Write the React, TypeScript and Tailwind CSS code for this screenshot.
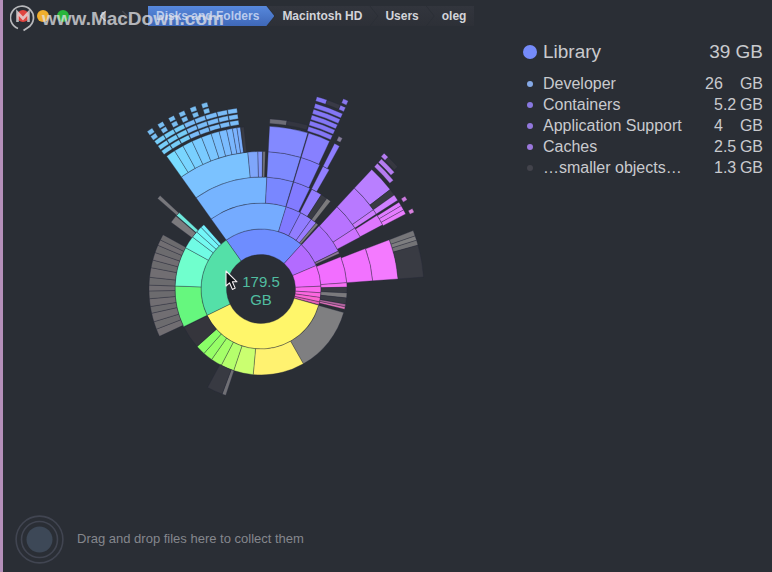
import { ChevronLeft, ChevronRight } from "lucide-react";

type Slice = {
  from: number;
  to: number;
  inner: number;
  outer: number;
  fill: string;
};

const RINGS = [34.5, 60, 86, 112, 137.5, 163];
const GRAY = "#7b7a7d";
const DARK = "#393b43";

const CRUMBS = ["Macintosh HD", "Users", "oleg"];

const ITEMS = [
  { name: "Developer", whole: "26", fraction: "", dot: "bg-[#85a9e6]" },
  { name: "Containers", whole: "5", fraction: ".2", dot: "bg-[#8878e0]" },
  { name: "Application Support", whole: "4", fraction: "", dot: "bg-[#9278dc]" },
  { name: "Caches", whole: "2", fraction: ".5", dot: "bg-[#9b78dc]" },
  { name: "…smaller objects…", whole: "1", fraction: ".3", dot: "bg-[#42434b]" },
];

// a slice that fills ring n (1 = next to the hole)
function ring(n: number, from: number, to: number, fill: string): Slice {
  return { from, to, inner: RINGS[n - 1], outer: RINGS[n], fill };
}

// a thin band for the deepest levels, centred on radius r
function band(r: number, from: number, to: number, fill: string): Slice {
  return { from, to, inner: r - 2.3, outer: r + 2.3, fill };
}

// consecutive slices in one ring, cut at the given angles
function cuts(n: number, angles: number[], fills: string[]): Slice[] {
  return angles.slice(1).map((to, i) => ring(n, angles[i], to, fills[i % fills.length]));
}

const SLICES: Slice[] = [
  // Library
  ring(1, -35.4, 42.2, "#6e8dff"),
  ring(2, -35.4, 17, "#75abff"),
  ring(3, -35.4, 3, "#76b4ff"),
  ring(4, -35.4, -5.5, "#7bc2ff"),
  ring(4, -5.5, -1.3, "#7fa6fb"),
  ring(4, -1.3, 0.6, "#8199fb"),
  ring(4, 0.8, 1.8, "#77777f"),
  ...cuts(
    5,
    [-35.4, -32, -28.6, -25, -21.4, -17.8, -14.9, -12.2, -10.1, -8.5, -7.3],
    ["#78dcff", "#79d5ff", "#79d0ff", "#7acbff", "#7bc6ff", "#7bc1ff", "#7bbcff", "#7bb7ff", "#7bb3ff", "#7aafff"]
  ),
  ring(5, -7.1, -6, DARK),
  ring(3, 3, 16.7, "#7987ff"),
  ring(4, 3, 16.7, "#7e8aff"),
  ring(5, 3, 16.7, "#8389ff"),
  ring(2, 17, 27.5, "#817aff"),
  ring(2, 27.5, 35.8, "#917dff"),
  ring(2, 35.8, 39.8, "#9a7cff"),
  ring(2, 39.8, 41.6, GRAY),
  ring(3, 17, 25.9, "#827bff"),
  ring(4, 17, 25.3, "#837eff"),
  ring(5, 17, 24.9, "#8780ff"),
  ring(3, 27, 32.6, "#947dff"),
  ring(3, 32.6, 36, DARK),
  ring(3, 36, 38.4, GRAY),
  ring(4, 26.8, 29.8, "#917eff"),
  ring(5, 26.8, 28.8, "#8f7eff"),

  // Applications
  ring(1, 42.2, 67, "#b36bff"),
  ring(2, 42.6, 63.8, "#ae6fff"),
  ring(2, 64, 65.6, "#8f7896"),
  ring(3, 42.8, 57, "#b873ff"),
  ring(3, 57, 62.4, "#cd73ff"),
  ring(4, 42.8, 54.8, "#b879ff"),
  ring(4, 54.8, 57, "#ce7bff"),
  ring(4, 57.6, 62.2, "#de76ff"),
  ring(5, 42.8, 52.4, "#b97fff"),
  ring(5, 52.4, 54.8, DARK),
  ring(5, 54.8, 57, "#cf81ff"),
  ...cuts(5, [57.8, 59.3, 61, 62.6], ["#e07cff", "#e57cff", "#ea7cff"]),

  // System
  ...cuts(1, [67, 87.3, 93.6, 98.2, 102.4, 105.2], ["#f36bff", "#fb69ee", "#fb67df", "#fb66d2", "#e75fb8"]),
  ring(2, 68, 85.8, "#f26eff"),
  ring(2, 85.8, 88.8, "#f66ff4"),
  ring(2, 88.8, 92.6, DARK),
  ring(2, 92.6, 96, GRAY),
  ring(2, 96, 100, DARK),
  ring(2, 100.2, 102, "#b566a1"),
  ring(2, 102, 103.6, "#e072ba"),
  ring(3, 68.8, 85.8, "#f272ff"),
  ring(4, 69, 85.8, "#f47aff"),
  ...cuts(5, [69, 71, 72.6, 74.4], ["#767679", "#7e7e80", "#737376"]),
  ring(5, 74.4, 85.8, DARK),

  // Users
  ring(1, 105.7, 244, "#fff66a"),
  ring(2, 105.9, 150.5, "#7f7f81"),
  ring(2, 150.5, 185.2, "#fff270"),
  ...cuts(2, [185.2, 198.5, 207.5, 215, 221.5, 228], ["#caff70", "#b5ff6c", "#a5ff69", "#97ff67", "#8aff67"]),
  ring(2, 228, 243.5, "#35353c"),
  ring(3, 198.3, 200.3, "#707075"),
  ring(3, 200.3, 208.5, "#383a42"),

  // Hovered folder
  ring(1, 244, 324.6, "#54e0a8"),
  ring(2, 244, 272, "#66f77e"),
  ring(2, 272, 298.7, "#70ffcd"),
  ...cuts(2, [298.7, 307.2, 311.6, 315.8, 318.4], ["#70fbe4", "#73faf0", "#73f6f8", "#73f0fc"]),
  ...cuts(3, [245, 249, 253, 257.5, 261, 265, 269, 272, 276, 281, 285, 289, 293, 296, 299], ["#716e72", "#6c6b6e"]),
  ring(3, 306.6, 310.6, GRAY),
  ring(3, 311, 313, "#6fe9dc"),
  ring(4, 311.2, 312.8, "#77777b"),

  // Deepest levels above Developer
  ...[168, 174, 180].flatMap((r) =>
    [-35.8, -32.2, -28.6, -25, -21.4, -17.8, -14, -10.6].map((a, i) =>
      band(r, a, [-32.4, -28.8, -25.2, -21.6, -18, -14.2, -10.8, -7.6][i], i < 3 ? "#76cdf8" : "#7abcf8")
    )
  ),
  ...[186, 192].flatMap((r) =>
    [-35, -31.3, -27.6, -24.2, -20.6, -17].map((a) => band(r, a - 0.9, a + 0.9, "#79bdf0"))
  ),

  // Deepest levels above Containers
  band(168, 3, 8.8, "#6d6d76"),
  band(168, 8.8, 16, "#343640"),
  ...[167, 173, 179, 185, 191].map((r) => band(r, 16.3, 25, "#8477f5")),
  band(198, 16.2, 19.3, "#8477f5"),
  band(198, 19.3, 23.3, "#393a46"),
  band(198, 23.4, 25, "#8a77ed"),
  band(205, 23.4, 24.9, "#8a77ed"),
  band(169, 27, 28.4, "#857d99"),

  // Deepest levels above Applications
  band(169, 42.8, 50.6, "#b57cf0"),
  band(175, 42.8, 48.8, "#b57cf0"),
  band(181, 42.2, 44, "#b57cf0"),
  band(181, 44, 48.2, "#363740"),
  band(169, 57.2, 58.6, "#ca79dc"),
  band(169, 62, 63.4, "#d880dc"),
];

function point(r: number, deg: number) {
  const a = (deg * Math.PI) / 180;
  return `${(r * Math.sin(a)).toFixed(2)} ${(-r * Math.cos(a)).toFixed(2)}`;
}

function slicePath({ from, to, inner, outer }: Slice) {
  const large = to - from > 180 ? 1 : 0;
  return [
    `M${point(outer, from)}`,
    `A${outer} ${outer} 0 ${large} 1 ${point(outer, to)}`,
    `L${point(inner, to)}`,
    `A${inner} ${inner} 0 ${large} 0 ${point(inner, from)}`,
    "Z",
  ].join(" ");
}

function Sunburst() {
  return (
    <svg width="380" height="420" viewBox="-190 -210 380 420" role="img" aria-label="Disk usage">
      {SLICES.map((slice, i) => (
        <path
          key={i}
          d={slicePath(slice)}
          fill={slice.fill}
          stroke="#23283a"
          strokeOpacity={0.48}
          strokeWidth={0.7}
        />
      ))}
      <text textAnchor="middle" className="fill-[#51bda0] text-[15px]">
        <tspan x="0" y="-2">179.5</tspan>
        <tspan x="0" y="16">GB</tspan>
      </text>
      {/* Mouse pointer */}
      <path
        d="M-35 -18V-3L-31.5 -6.2L-28.6 0.4L-25.8 -0.9L-28.6 -7.2H-24Z"
        fill="#111318"
        stroke="#f4eef2"
        strokeWidth={1.1}
        strokeLinejoin="round"
      />
    </svg>
  );
}

function TitleBar() {
  return (
    <header className="flex h-8 items-center">
      <div className="flex w-[63px] gap-2 pl-[14px]">
        <button aria-label="Close" className="h-3 w-3 shrink-0 rounded-full bg-[#e0443f]" />
        <button aria-label="Minimize" className="h-3 w-3 shrink-0 rounded-full bg-[#f0ae2e]" />
        <button aria-label="Zoom" className="h-3 w-3 shrink-0 rounded-full bg-[#27b53c]" />
      </div>
      <div className="flex w-[82px] items-center gap-1 pl-7">
        <button aria-label="Back" className="text-[#b4b6bc]">
          <ChevronLeft size={18} strokeWidth={2} />
        </button>
        <button aria-label="Forward" className="text-[#43464e]">
          <ChevronRight size={18} strokeWidth={2} />
        </button>
      </div>
      <nav className="flex h-5 text-[12px] leading-[21px] font-bold whitespace-nowrap text-[#d3d4d9]">
        <a
          href="#disks"
          className="bg-linear-to-b from-[#5788dc] to-[#3f68b8] pr-[15px] pl-2 text-[#b9cbee] [clip-path:polygon(0_0,calc(100%-8px)_0,100%_50%,calc(100%-8px)_100%,0_100%)]"
        >
          Disks and Folders
        </a>
        {CRUMBS.map((crumb) => (
          <a
            key={crumb}
            href={`#${crumb}`}
            className="-ml-[7px] bg-linear-to-b from-[#32353d] to-[#2d3037] pr-[15px] pl-[15px] [clip-path:polygon(0_0,calc(100%-8px)_0,100%_50%,calc(100%-8px)_100%,0_100%,8px_50%)] last:pr-2 last:[clip-path:polygon(0_0,100%_0,100%_100%,0_100%,8px_50%)]"
          >
            {crumb}
          </a>
        ))}
      </nav>
    </header>
  );
}

function FolderList() {
  return (
    <aside className="w-[254px] shrink-0 pt-2 pr-[9px] pl-[5px] text-[#c9cace]">
      <div className="flex h-6 items-center text-[19px]">
        <span className="mr-[6px] h-[14px] w-[14px] rounded-full bg-[#758bfa]" />
        <h1 className="flex-1">Library</h1>
        <span>39 GB</span>
      </div>
      <table className="mt-[9px] w-full text-[16px] leading-[21px]">
        <tbody>
          {ITEMS.map((item) => (
            <tr key={item.name}>
              <td className="w-5">
                <span className={`ml-1 block h-[6px] w-[6px] rounded-full ${item.dot}`} />
              </td>
              <th scope="row" className="text-left font-normal whitespace-nowrap">
                {item.name}
              </th>
              <td>
                <span className="flex justify-end">
                  <span>{item.whole}</span>
                  <span className="w-[17px]">{item.fraction}</span>
                  <span>GB</span>
                </span>
              </td>
            </tr>
          ))}
        </tbody>
      </table>
    </aside>
  );
}

function Collector() {
  return (
    <footer className="flex h-[66px] items-center gap-[13px] pl-3">
      <svg width="49" height="49" viewBox="0 0 49 49" fill="none" stroke="#414551" strokeWidth={1.6}>
        <circle cx="24.5" cy="24.5" r="23.4" />
        <circle cx="24.5" cy="24.5" r="18" />
        <circle cx="24.5" cy="24.5" r="13" fill="#3d4857" stroke="none" />
      </svg>
      <p className="text-[13px] text-[#85878d]">Drag and drop files here to collect them</p>
    </footer>
  );
}

function Watermark() {
  return (
    <div className="pointer-events-none absolute top-[5px] left-[7px] flex items-center gap-[6px] opacity-75">
      <svg width="26" height="28" viewBox="0 0 26 28" fill="none" stroke="#e6e6e8">
        <path d="M8 23.5A11.5 11.5 0 1 1 18 22.5L13.5 25.5" strokeWidth={1.7} />
        <path d="M7.5 17V7.5L13 13.5L18.5 7.5V17" strokeWidth={2.6} />
      </svg>
      <span className="text-[19px] leading-7 font-bold text-[#e2e2e6]">www.MacDown.com</span>
    </div>
  );
}

export default function App() {
  return (
    <div className="relative flex min-h-screen flex-col border-l-[3px] border-[#b48fb9] bg-[#2a2e35] font-['Liberation_Sans',Arial,sans-serif]">
      <TitleBar />
      <main className="flex flex-1">
        <div className="flex flex-1 items-center justify-center pt-10">
          <Sunburst />
        </div>
        <FolderList />
      </main>
      <Collector />
      <Watermark />
    </div>
  );
}
